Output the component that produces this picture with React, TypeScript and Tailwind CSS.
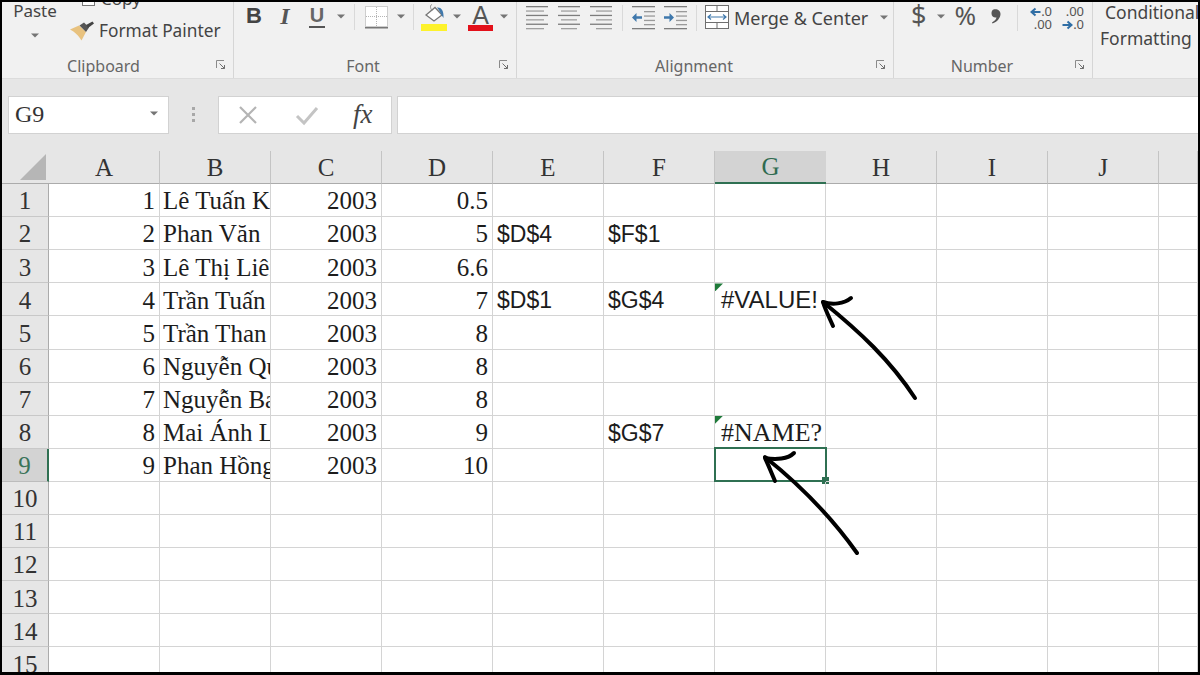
import * as React from "react";

const uiFont = "font-['Noto_Sans',sans-serif]";
const serif = "font-['Liberation_Serif',serif]";
const arial = "font-['Liberation_Sans',sans-serif]";

const columns = ["A", "B", "C", "D", "E", "F", "G", "H", "I", "J", ""];

type Cell = { text: string; align?: "left" | "right"; font?: string };

const names = [
  "Lê Tuấn Khải",
  "Phan Văn",
  "Lê Thị Liên",
  "Trần Tuấn",
  "Trần Than",
  "Nguyễn Qu",
  "Nguyễn Ba",
  "Mai Ánh Linh",
  "Phan Hồng Anh",
];
const scores = ["0.5", "5", "6.6", "7", "8", "8", "8", "9", "10"];
const refFont = `${arial} text-[23px]`;

function cellsFor(row: number): Record<string, Cell> {
  const out: Record<string, Cell> = {};
  if (row <= 9) {
    out.A = { text: String(row), align: "right" };
    out.B = { text: names[row - 1], align: "left" };
    out.C = { text: "2003", align: "right" };
    out.D = { text: scores[row - 1], align: "right" };
  }
  if (row === 2) {
    out.E = { text: "$D$4", font: refFont };
    out.F = { text: "$F$1", font: refFont };
  }
  if (row === 4) {
    out.E = { text: "$D$1", font: refFont };
    out.F = { text: "$G$4", font: refFont };
    out.G = { text: "#VALUE!", font: `${arial} text-[24px]` };
  }
  if (row === 8) {
    out.F = { text: "$G$7", font: refFont };
    out.G = { text: "#NAME?", font: `${serif} text-[26px]` };
  }
  return out;
}

function Caret({ className = "" }: { className?: string }) {
  return (
    <svg width="8" height="5" viewBox="0 0 8 5" className={`shrink-0 ${className}`}>
      <path d="M0 0.5h8L4 4.5z" fill="#757575" />
    </svg>
  );
}

function Launcher() {
  return (
    <svg width="10" height="10" viewBox="0 0 10 10" className="absolute right-[7px] top-[6px]">
      <path d="M0.5 8V0.5H8" fill="none" stroke="#8a8a8a" />
      <path d="M3.5 3.5L8.5 8.5M8.5 5V8.5H5" fill="none" stroke="#6f6f6f" />
    </svg>
  );
}

function Sep({ className = "" }: { className?: string }) {
  return <div className={`h-[26px] w-px shrink-0 bg-[#d9d9d9] ${className}`} />;
}

function RibbonGroup({
  label,
  width,
  labelPad,
  children,
}: {
  label: string;
  width: string;
  labelPad: string;
  children: React.ReactNode;
}) {
  return (
    <section className={`flex h-full shrink-0 flex-col border-r border-[#d6d6d6] ${width}`}>
      <div className="h-[53px] overflow-hidden">{children}</div>
      <div className={`relative -mt-[1px] flex h-[23px] items-center justify-center text-[16px] text-[#666] ${labelPad}`}>
        {label}
        <Launcher />
      </div>
    </section>
  );
}

function AlignIcon({ kind }: { kind: "left" | "center" | "right" }) {
  const rows = [22, 16, 22, 16, 22, 16];
  return (
    <svg width="22" height="26" viewBox="0 0 22 26" className="shrink-0">
      {rows.map((w, i) => {
        const full = kind === "left" ? 22 : w;
        const x = kind === "center" ? (22 - full) / 2 : kind === "right" ? 22 - w : 0;
        const width = kind === "left" ? (i % 2 ? 18 : 22) : full;
        return (
          <rect key={i} x={x} y={1 + i * 4.4} width={width} height="1.3" fill={i % 2 ? "#a0a0a0" : "#7d7d7d"} />
        );
      })}
    </svg>
  );
}

function IndentIcon({ flip }: { flip?: boolean }) {
  return (
    <svg width="23" height="26" viewBox="0 0 23 26" className="shrink-0">
      <rect x="0" y="1" width="23" height="1.3" fill="#7d7d7d" />
      <rect x="0" y="23" width="23" height="1.3" fill="#7d7d7d" />
      {[6, 10.4, 14.8, 19].map((y) => (
        <rect key={y} x="12" y={y} width="11" height="1.3" fill="#9a9a9a" />
      ))}
      {flip ? (
        <path d="M0 11.2h5.5V8L10 12.5L5.5 17v-3.2H0z" fill="#3f78ac" />
      ) : (
        <path d="M10 11.2H4.5V8L0 12.5L4.5 17v-3.2H10z" fill="#3f78ac" />
      )}
    </svg>
  );
}

function BordersIcon() {
  return (
    <svg width="24" height="23" viewBox="0 0 24 23" className="shrink-0">
      <rect x="0.5" y="0.5" width="22" height="20" fill="#fff" stroke="#a5a5a5" strokeDasharray="1 1" />
      <path d="M11.5 1V20M1 10.5H23" stroke="#b5b5b5" strokeDasharray="1 1" />
      <rect x="0" y="21" width="23" height="1.5" fill="#777" />
    </svg>
  );
}

function FillIcon() {
  return (
    <svg width="26" height="27" viewBox="0 0 26 27" className="shrink-0">
      <path d="M5 11L14 3.5L21 11L13 17z" fill="#fff" stroke="#777" strokeWidth="1.3" />
      <path d="M11 0.5C9 1 9 4 11 6.5" fill="none" stroke="#888" />
      <path d="M16 3.5C20 3 23 6 22.5 14C19.5 10 19 7 16 3.5z" fill="#3f78ac" />
      <rect x="0" y="20" width="26" height="7" fill="#fdf22c" />
    </svg>
  );
}

function MergeIcon() {
  return (
    <svg width="24" height="24" viewBox="0 0 24 24" className="shrink-0">
      <rect x="0.5" y="0.5" width="23" height="23" fill="#fff" stroke="#6f6f6f" />
      <path d="M0 6.5H24M0 17.5H24M12 0V6.5M12 17.5V24" stroke="#6f6f6f" />
      <path d="M3 12H21M6 9.5L3 12L6 14.5M18 9.5L21 12L18 14.5" fill="none" stroke="#3f78ac" strokeWidth="1.2" />
    </svg>
  );
}

function BrushIcon() {
  return (
    <svg width="25" height="20" viewBox="0 0 25 20" className="shrink-0">
      <path d="M0 8.5L9 4.5L16 11L11.5 19.5C8 14 5 11 0 8.5z" fill="#e8c27f" />
      <path d="M9.5 4.5L14 1.5L19 6.5L16 11z" fill="#555" />
      <path d="M16 4L22.5 0.5L24 2.5L18 7z" fill="#444" />
    </svg>
  );
}

function CommaIcon() {
  return (
    <svg width="10" height="15" viewBox="0 0 10 15" className="mt-[7px] shrink-0">
      <path d="M2.5 0.5C6 -0.5 9.5 1.5 9.5 5C9.5 9 6 13 1.5 14.5L1 13.5C3.5 12 5 10.5 5.5 8.5C3 9 0.5 7.5 0.5 4.5C0.5 2.5 1.2 1 2.5 0.5z" fill="#555" />
    </svg>
  );
}

function SmallArrow({ right }: { right?: boolean }) {
  return (
    <svg width="11" height="10" viewBox="0 0 11 10" className="shrink-0">
      {right ? (
        <path d="M0.5 5H9M5.5 1.5L9.5 5L5.5 8.5" fill="none" stroke="#2f6ea5" strokeWidth="2" />
      ) : (
        <path d="M10.5 5H2M5.5 1.5L1.5 5L5.5 8.5" fill="none" stroke="#2f6ea5" strokeWidth="2" />
      )}
    </svg>
  );
}

function Ribbon() {
  return (
    <div className={`flex h-[76px] shrink-0 overflow-hidden bg-[#f1f1f1] ${uiFont} text-[#444]`}>
      <RibbonGroup label="Clipboard" width="w-[232px]" labelPad="pr-[28px]">
        <div className="flex">
          <div className="flex w-[66px] shrink-0 flex-col items-center">
            <span className="text-[17px] leading-[18px]">Paste</span>
            <Caret className="mt-[13px]" />
          </div>
          <div className="flex flex-col">
            <div className="-mt-[13px] ml-[14px] flex h-[20px] items-center gap-[6px] text-[17px]">
              <span className="h-[14px] w-[13px] border border-[#777] bg-white" />
              <span>Copy</span>
            </div>
            <div className="ml-[2px] mt-[11px] flex items-center gap-[4px] text-[17.3px] leading-[22px]">
              <BrushIcon />
              <span>Format Painter</span>
            </div>
          </div>
        </div>
      </RibbonGroup>

      <RibbonGroup label="Font" width="w-[283px]" labelPad="pr-[24px]">
        <div className="flex h-[30px] items-start pt-[2px]">
          <span className={`ml-[12px] w-[16px] text-center text-[22px] font-bold leading-[24px] text-[#444] ${arial}`}>B</span>
          <span className={`ml-[16px] w-[14px] text-center text-[24px] font-bold italic leading-[24px] text-[#555] ${serif}`}>I</span>
          <span className={`ml-[17px] w-[16px] border-b-2 border-[#555] text-center text-[20px] font-bold leading-[22px] text-[#666] ${arial}`}>U</span>
          <Caret className="ml-[12px] mt-[10px]" />
          <Sep className="ml-[9px]" />
          <div className="ml-[10px] mt-[2px]">
            <BordersIcon />
          </div>
          <Caret className="ml-[8px] mt-[10px]" />
          <Sep className="ml-[8px]" />
          <div className="ml-[7px]">
            <FillIcon />
          </div>
          <Caret className="ml-[6px] mt-[10px]" />
          <div className="ml-[7px] flex w-[25px] flex-col items-center">
            <span className={`pt-[1px] text-[25px] leading-[20px] text-[#555] ${arial}`}>A</span>
            <span className="h-[6px] w-full bg-[#e3101a]" />
          </div>
          <Caret className="ml-[7px] mt-[10px]" />
        </div>
      </RibbonGroup>

      <RibbonGroup label="Alignment" width="w-[377px]" labelPad="pr-[22px]">
        <div className="flex h-[34px] items-start pt-[3px]">
          <div className="ml-[9px] flex gap-[10px]">
            <AlignIcon kind="left" />
            <AlignIcon kind="center" />
            <AlignIcon kind="right" />
          </div>
          <Sep className="ml-[10px]" />
          <div className="ml-[9px] flex gap-[9px]">
            <IndentIcon />
            <IndentIcon flip />
          </div>
          <Sep className="ml-[9px]" />
          <div className="ml-[8px]">
            <MergeIcon />
          </div>
          <span className="ml-[5px] text-[18px] leading-[26px]">Merge &amp; Center</span>
          <Caret className="ml-[12px] mt-[10px]" />
        </div>
      </RibbonGroup>

      <RibbonGroup label="Number" width="w-[199px]" labelPad="pr-[22px]">
        <div className="flex h-[34px] items-start">
          <span className="ml-[17px] text-[27px] leading-[26px] text-[#555]">$</span>
          <Caret className="ml-[11px] mt-[12px]" />
          <span className="ml-[9px] text-[26px] leading-[26px] text-[#555]">%</span>
          <div className="ml-[15px]">
            <CommaIcon />
          </div>
          <Sep className="ml-[16px] mt-[3px]" />
          <div className="ml-[9px] flex w-[25px] flex-col pt-[3px] text-[13px] leading-[13px] text-[#555]">
            <span className="flex items-center justify-end">
              <SmallArrow />
              .0
            </span>
            <span className="text-right">.00</span>
          </div>
          <div className="ml-[7px] flex w-[25px] flex-col pt-[3px] text-[13px] leading-[13px] text-[#555]">
            <span className="text-right">.00</span>
            <span className="flex items-center justify-end">
              <SmallArrow right />
              .0
            </span>
          </div>
        </div>
      </RibbonGroup>

      <div className="flex flex-col whitespace-nowrap pl-[7px] text-[17.5px] leading-[26px]">
        <span className="-mt-[3px] pl-[5px]">Conditional</span>
        <span>Formatting</span>
      </div>
    </div>
  );
}

function FormulaBar() {
  return (
    <div className="flex h-[73px] shrink-0 items-center border-t border-[#dcdcdc] bg-[#e6e6e6] pb-[1px] pl-[6px]">
      <div className="flex h-[38px] w-[161px] shrink-0 items-center justify-between border border-[#d2d2d2] bg-white pb-[2px] pl-[6px] pr-[10px]">
        <span className={`text-[24px] text-[#333] ${serif}`}>G9</span>
        <Caret />
      </div>
      <div className="flex w-[49px] shrink-0 flex-col items-center gap-[3px]">
        {[0, 1, 2].map((i) => (
          <span key={i} className="size-[3px] bg-[#a8a8a8]" />
        ))}
      </div>
      <div className="flex h-[38px] w-[174px] shrink-0 items-center border border-[#d2d2d2] bg-white">
        <svg width="22" height="22" viewBox="0 0 22 22" className="ml-[18px]">
          <path d="M3 3L19 19M19 3L3 19" stroke="#b4b4b4" strokeWidth="2.2" />
        </svg>
        <svg width="24" height="22" viewBox="0 0 24 22" className="ml-[36px]">
          <path d="M2 12L9 19L22 4" fill="none" stroke="#c4c4c4" strokeWidth="3" />
        </svg>
        <span className={`ml-[34px] text-[27px] italic text-[#444] ${serif}`}>fx</span>
      </div>
      <div className="ml-[5px] h-[38px] flex-1 border-y border-l border-[#d2d2d2] bg-white" />
    </div>
  );
}

function CommentMark() {
  return <span className="absolute left-0 top-0 size-[8px] bg-[#1f7a3a] [clip-path:polygon(0_0,100%_0,0_100%)]" />;
}

function Sheet() {
  const rows = Array.from({ length: 15 }, (_, i) => i + 1);
  return (
    <div className="grid flex-1 grid-cols-[47px_repeat(10,111px)_39px] auto-rows-[33.1px] overflow-hidden bg-white text-[25px] text-[#1c1c1c]">
      <div className="flex items-center justify-center border-b border-[#ababab] bg-[#e6e6e6]">
        <svg width="26" height="26" viewBox="0 0 26 26" className="ml-[14px]">
          <path d="M26 0V26H0z" fill="#b6b6b6" />
        </svg>
      </div>
      {columns.map((col, i) => (
        <div
          key={i}
          className={`flex items-center justify-center pt-[1px] ${serif} ${
            col === "G"
              ? "border-b-2 border-b-[#2f7052] bg-[#d3d3d3] text-[#2f6b50]"
              : "border-b border-r border-b-[#ababab] border-r-[#c4c4c4] bg-[#e6e6e6] text-[#333]"
          }`}
        >
          {col}
        </div>
      ))}

      {rows.map((row) => {
        const cells = cellsFor(row);
        const active = row === 9;
        return (
          <React.Fragment key={row}>
            <div
              className={`flex items-center justify-center border-b pt-[2px] ${serif} ${
                active
                  ? "border-r-2 border-b-[#bcbcbc] border-r-[#2f7052] bg-[#d3d3d3] text-[#3a7359]"
                  : "border-r border-b-[#c8c8c8] border-r-[#ababab] bg-[#e6e6e6] text-[#333]"
              }`}
            >
              {row}
            </div>
            {columns.map((col, i) => {
              const cell = cells[col];
              return (
                <div
                  key={i}
                  className={`relative flex items-center border-b border-r border-[#d4d4d4] pt-[2px] ${
                    cell?.align === "right"
                      ? "justify-end pr-[4px]"
                      : col === "G"
                        ? "pl-[6px]"
                        : col === "B"
                          ? "pl-[3px]"
                          : "pl-[4px]"
                  } ${cell?.font ?? serif}`}
                >
                  {cell &&
                    (col === "B" ? (
                      <span className="block w-full overflow-hidden whitespace-nowrap">{cell.text}</span>
                    ) : (
                      <span className="whitespace-nowrap">{cell.text}</span>
                    ))}
                  {col === "G" && (row === 4 || row === 8) && <CommentMark />}
                  {col === "G" && active && (
                    <div className="absolute -bottom-[1px] -left-[1px] -right-[2px] -top-[2px] border-2 border-[#2f7052]">
                      <span className="absolute -bottom-[4px] -right-[4px] size-[7px] bg-[#2f7052]" />
                    </div>
                  )}
                </div>
              );
            })}
          </React.Fragment>
        );
      })}
    </div>
  );
}

function HandArrows() {
  return (
    <svg width="1200" height="675" viewBox="0 0 1200 675" className="pointer-events-none absolute left-0 top-0">
      <g fill="none" stroke="#000" strokeWidth="4" strokeLinecap="round" strokeLinejoin="round">
        <path d="M915 398C890 360 860 332 823 302" />
        <path d="M833 326C829 317 825 309 823 302C832 305 844 304 851 298" />
        <path d="M857 553C830 515 800 485 765 457" />
        <path d="M775 481C771 472 768 464 765 458C776 460 788 459 794 453" />
      </g>
    </svg>
  );
}

export default function App() {
  return (
    <div className="relative h-[675px] w-[1200px] overflow-hidden bg-black pb-[3px] pl-[2px] pr-[2px] pt-[2px]">
      <div className="flex h-full flex-col overflow-hidden">
        <Ribbon />
        <FormulaBar />
        <Sheet />
      </div>
      <HandArrows />
    </div>
  );
}
